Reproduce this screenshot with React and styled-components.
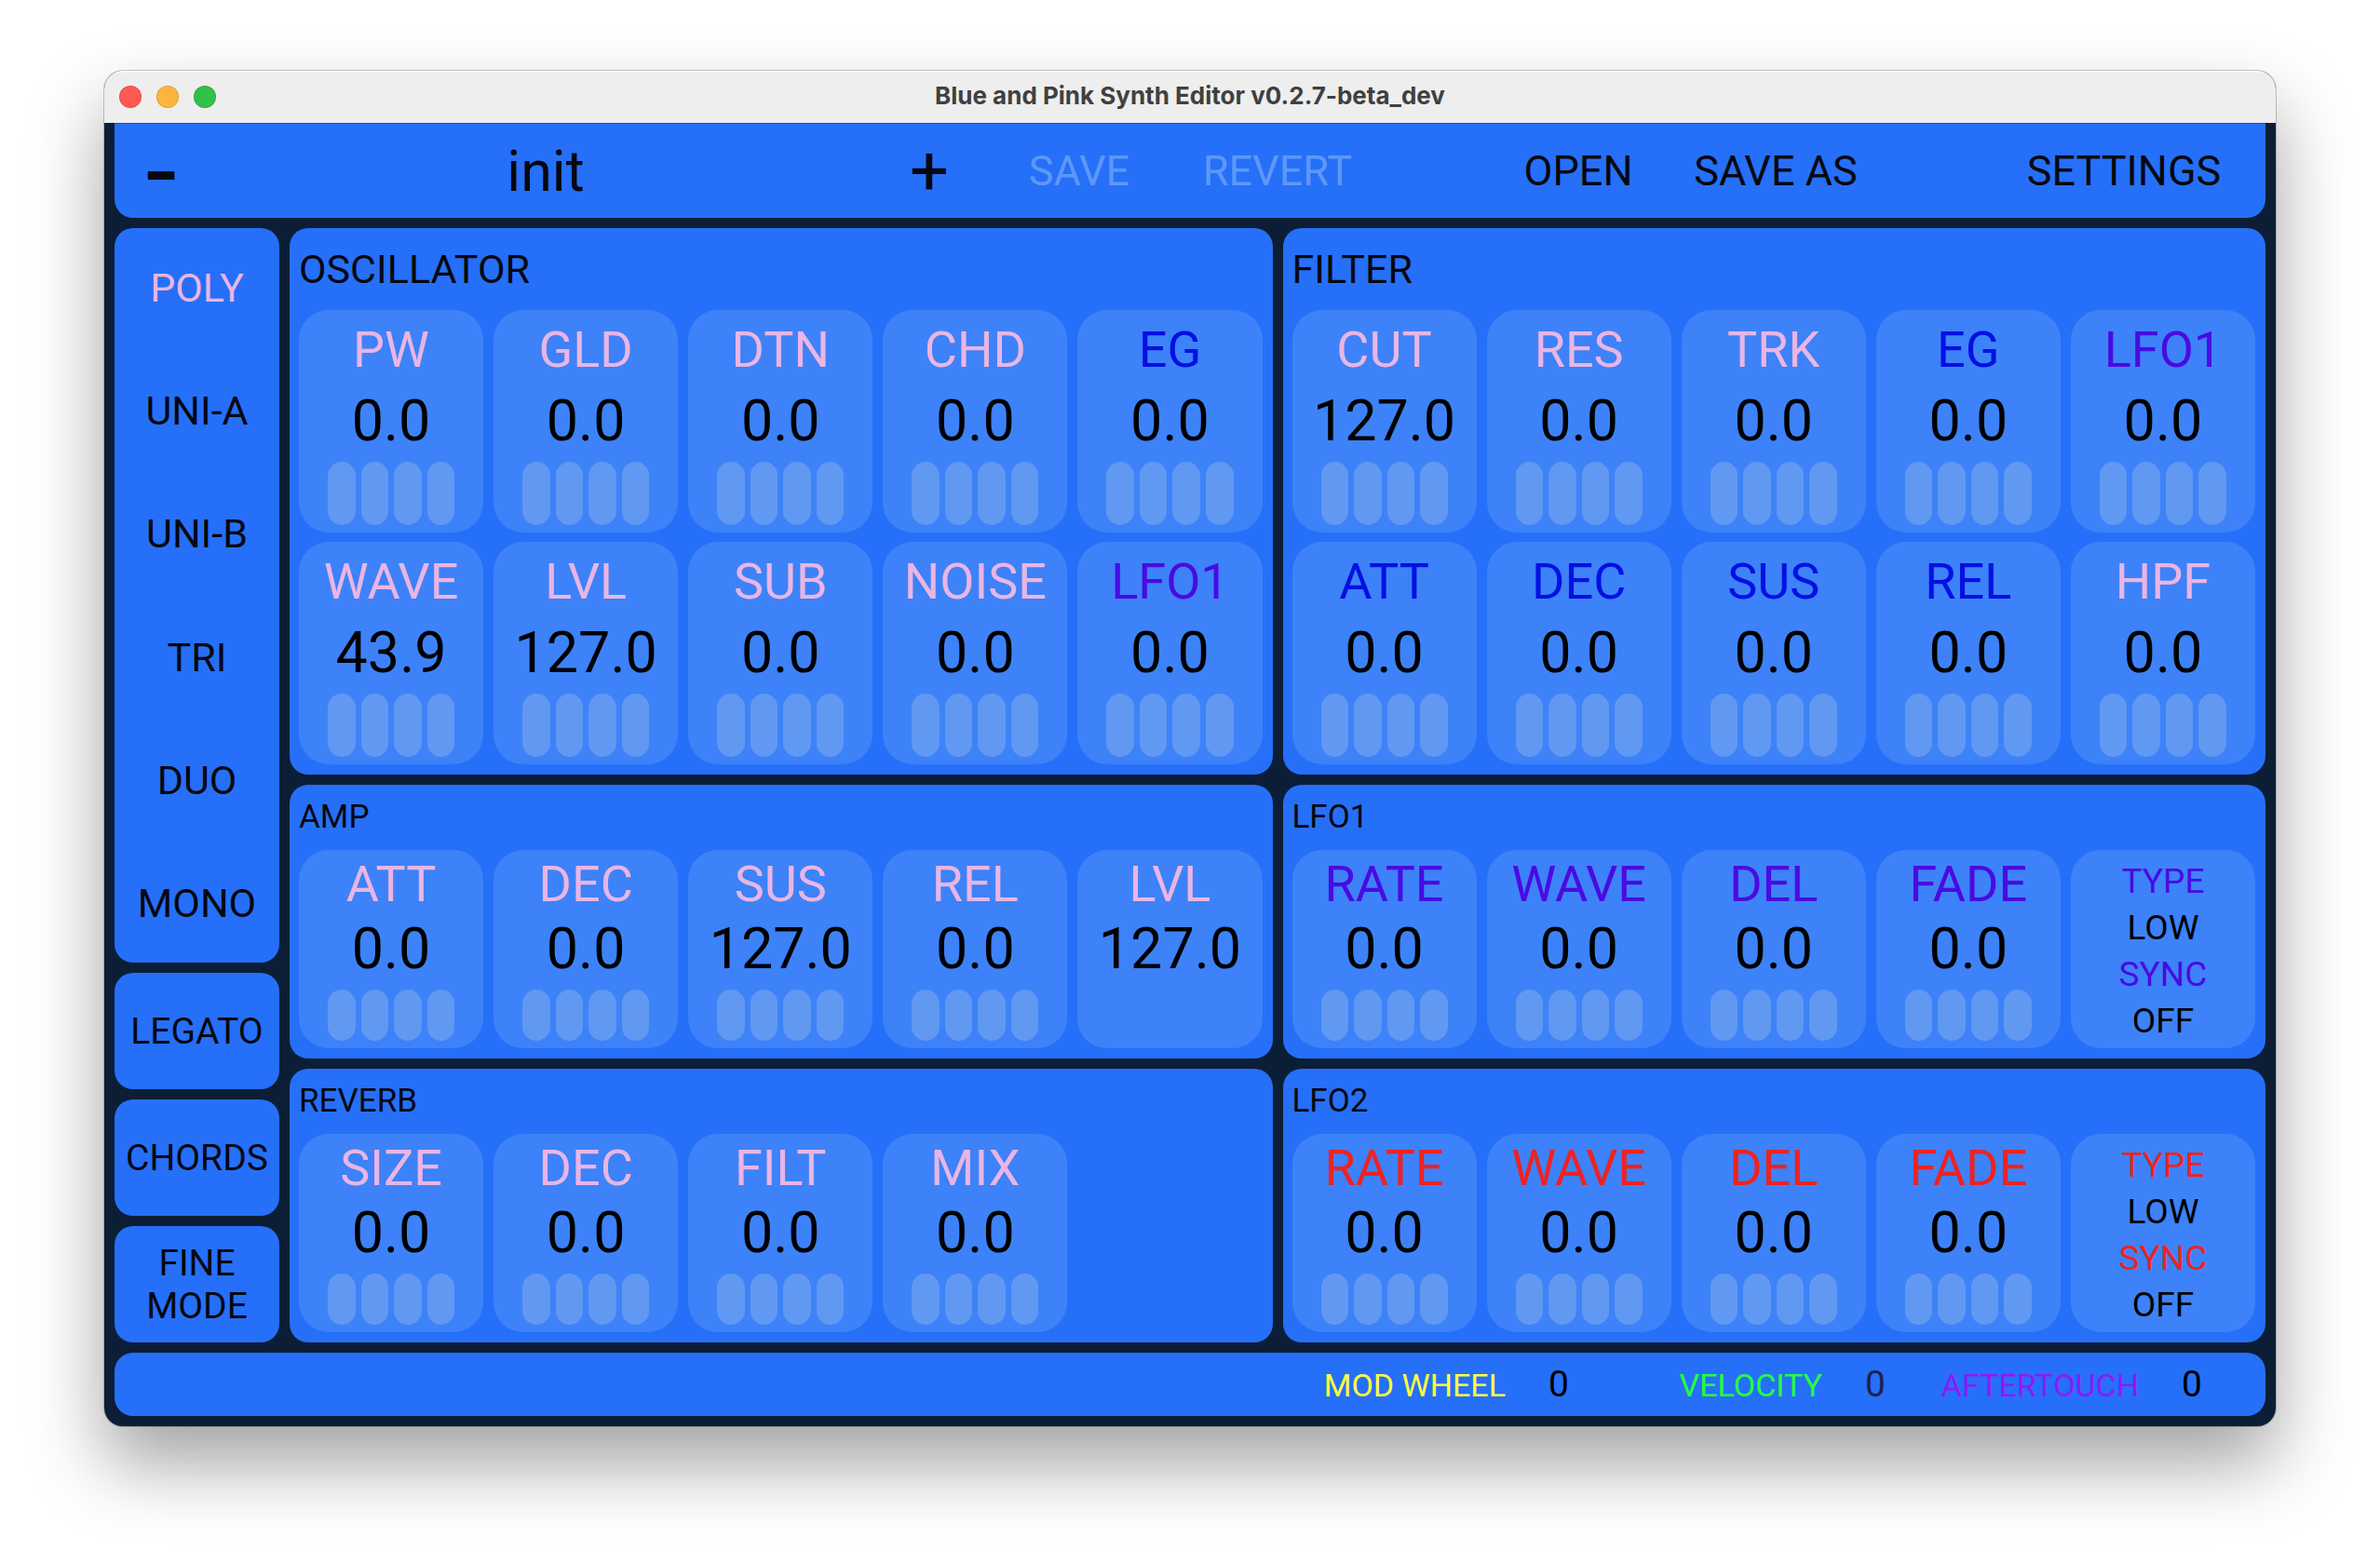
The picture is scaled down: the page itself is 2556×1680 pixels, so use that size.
import React from "react";
import styled, { createGlobalStyle } from "styled-components";

const color = {
  base: "#0c1e36",
  panel: "#266ff8",
  cell: "#3d82f8",
  slot: "#6198f2",
  ink: "#06080f",
  pink: "#e9b5e4",
  eg: "#0410e2",
  lfo1: "#4a0ae2",
  lfo2: "#ee2222",
  disabled: "#5d98f8",
  wheel: "#ffff3c",
  velocity: "#24ff3e",
  touch: "#8c1af8",
};

const GlobalStyle = createGlobalStyle`
  *, *::before, *::after { box-sizing: border-box; }
  body {
    margin: 0;
    background: #fff;
    font-family: Roboto, "Liberation Sans", sans-serif;
    color: ${color.ink};
  }
  button {
    margin: 0;
    padding: 0;
    border: 0;
    background: none;
    color: inherit;
    font: inherit;
    cursor: pointer;
  }
`;

const Page = styled.div`
  padding: 76px 112px 148px;
`;

const Window = styled.main`
  overflow: hidden;
  border-radius: 20px;
  background: ${color.base};
  box-shadow: 0 0 0 1px rgba(0, 0, 0, 0.2), 0 40px 80px rgba(0, 0, 0, 0.37);
`;

const TitleBar = styled.header`
  display: grid;
  grid-template-columns: 1fr auto 1fr;
  align-items: center;
  height: 56px;
  padding: 0 16px;
  background: #eeeeee;
  box-shadow: inset 0 2px #f8f8f8;
`;

const Lights = styled.div`
  display: flex;
  gap: 16px;
`;

const Light = styled.button`
  width: 24px;
  height: 24px;
  border-radius: 50%;
  background: ${(p) => p.$fill};
  box-shadow: inset 0 0 0 1px rgba(0, 0, 0, 0.12);
`;

const WindowTitle = styled.h1`
  margin: 0;
  padding-bottom: 2px;
  font: 700 26px/32px Inter, Roboto, sans-serif;
  color: #404040;
`;

const Body = styled.div`
  display: flex;
  flex-direction: column;
  gap: 11px;
  padding: 0 11px 11px;
`;

const Toolbar = styled.nav`
  display: grid;
  grid-template-columns: 100fr 726fr 98fr 224fr 202fr 116fr 212fr 212fr 116fr 304fr;
  align-items: center;
  height: 102px;
  padding-top: 2px;
  border-radius: 0 0 20px 20px;
  background: ${color.panel};
  box-shadow: inset 0 1px #0f50cc;
`;

const ToolButton = styled.button`
  grid-column: ${(p) => p.$col};
  font-size: 45px;
  line-height: 100px;
  white-space: nowrap;
  &:disabled {
    color: ${color.disabled};
    cursor: default;
  }
`;

const StepButton = styled.button`
  font-size: ${(p) => p.$size}px;
  line-height: 100px;
`;

const PatchName = styled.div`
  font-size: 61px;
  line-height: 100px;
  text-align: center;
`;

const Workspace = styled.div`
  display: grid;
  grid-template-columns: 177px 1fr 1fr;
  gap: 11px;
`;

const Column = styled.div`
  display: flex;
  flex-direction: column;
  gap: 11px;
  min-width: 0;
`;

const Modes = styled.div`
  display: flex;
  flex: 1;
  flex-direction: column;
  gap: 5px;
  border-radius: 20px;
  background: ${color.panel};
`;

const ModeButton = styled.button`
  flex: 1;
  font-size: 43px;
  color: ${(p) => (p.$active ? color.pink : color.ink)};
`;

const SideButton = styled.button`
  height: 125px;
  border-radius: 20px;
  background: ${color.panel};
  font-size: 39px;
  line-height: 46px;
`;

const Panel = styled.section`
  padding: 0 11px 11px 10px;
  border-radius: 20px;
  background: ${color.panel};
`;

const PanelTitle = styled.h2`
  margin: 0;
  font-size: ${(p) => (p.$tall ? 43 : 35)}px;
  font-weight: 400;
  line-height: ${(p) => (p.$tall ? 88 : 70)}px;
`;

const Cells = styled.div`
  display: grid;
  grid-template-columns: repeat(5, minmax(0, 1fr));
  gap: 10px 11px;
`;

const Cell = styled.div`
  display: flex;
  flex-direction: column;
  height: ${(p) => (p.$tall ? 239 : 213)}px;
  padding-bottom: 8px;
  border-radius: 32px;
  background: ${color.cell};
  text-align: center;
`;

const CellLabel = styled.div`
  font-size: 54px;
  line-height: ${(p) => (p.$tall ? 86 : 73)}px;
  color: ${(p) => p.$color};
`;

const CellValue = styled.output`
  font-size: 61px;
  line-height: 66px;
  color: #000;
`;

const Slots = styled.div`
  display: flex;
  gap: 6px;
  height: ${(p) => (p.$tall ? 68 : 55)}px;
  margin-top: auto;
  padding: 0 31px;
`;

const Slot = styled.span`
  flex: 1;
  border-radius: 15px;
  background: ${color.slot};
`;

const SwitchCell = styled(Cell)`
  padding: 9px 0 7px;
`;

const SwitchLine = styled.div`
  flex: 1;
  font-size: 37px;
  line-height: 50px;
  color: ${(p) => p.$color || "#000"};
`;

const Footer = styled.footer`
  display: flex;
  justify-content: flex-end;
  align-items: center;
  height: 68px;
  padding-right: 22px;
  border-radius: 20px;
  background: ${color.panel};
`;

const Meter = styled.div`
  display: grid;
  grid-template-columns: 226px 114px;
  align-items: baseline;
`;

const MeterLabel = styled.span`
  font-size: 34px;
  text-align: right;
  white-space: nowrap;
  color: ${(p) => p.$color};
`;

const MeterValue = styled.output`
  font-size: 39px;
  text-align: center;
  color: ${(p) => (p.$dim ? "#1c2350" : "#000")};
`;

const { pink, eg, lfo1, lfo2 } = color;

const oscillator = [
  ["PW", "0.0", pink],
  ["GLD", "0.0", pink],
  ["DTN", "0.0", pink],
  ["CHD", "0.0", pink],
  ["EG", "0.0", eg],
  ["WAVE", "43.9", pink],
  ["LVL", "127.0", pink],
  ["SUB", "0.0", pink],
  ["NOISE", "0.0", pink],
  ["LFO1", "0.0", lfo1],
];

const filter = [
  ["CUT", "127.0", pink],
  ["RES", "0.0", pink],
  ["TRK", "0.0", pink],
  ["EG", "0.0", eg],
  ["LFO1", "0.0", lfo1],
  ["ATT", "0.0", eg],
  ["DEC", "0.0", eg],
  ["SUS", "0.0", eg],
  ["REL", "0.0", eg],
  ["HPF", "0.0", pink],
];

const amp = [
  ["ATT", "0.0", pink],
  ["DEC", "0.0", pink],
  ["SUS", "127.0", pink],
  ["REL", "0.0", pink],
  ["LVL", "127.0", pink, true],
];

const reverb = [
  ["SIZE", "0.0", pink],
  ["DEC", "0.0", pink],
  ["FILT", "0.0", pink],
  ["MIX", "0.0", pink],
];

const lfo = (tint) => ["RATE", "WAVE", "DEL", "FADE"].map((name) => [name, "0.0", tint]);

const modes = ["POLY", "UNI-A", "UNI-B", "TRI", "DUO", "MONO"];

function Param({ name, value, tint, tall, plain }) {
  return (
    <Cell $tall={tall}>
      <CellLabel $tall={tall} $color={tint}>{name}</CellLabel>
      <CellValue>{value}</CellValue>
      {!plain && (
        <Slots $tall={tall}>
          <Slot />
          <Slot />
          <Slot />
          <Slot />
        </Slots>
      )}
    </Cell>
  );
}

function ParamPanel({ title, params, tall, children }) {
  return (
    <Panel>
      <PanelTitle $tall={tall}>{title}</PanelTitle>
      <Cells>
        {params.map(([name, value, tint, plain]) => (
          <Param key={name} name={name} value={value} tint={tint} tall={tall} plain={plain} />
        ))}
        {children}
      </Cells>
    </Panel>
  );
}

function LfoSwitches({ tint }) {
  return (
    <SwitchCell>
      <SwitchLine $color={tint}>TYPE</SwitchLine>
      <SwitchLine>LOW</SwitchLine>
      <SwitchLine $color={tint}>SYNC</SwitchLine>
      <SwitchLine>OFF</SwitchLine>
    </SwitchCell>
  );
}

export default function App() {
  const [mode, setMode] = React.useState("POLY");
  return (
    <Page>
      <GlobalStyle />
      <Window>
        <TitleBar>
          <Lights>
            <Light $fill="#ff5a52" aria-label="Close" />
            <Light $fill="#fdb53f" aria-label="Minimize" />
            <Light $fill="#31c148" aria-label="Zoom" />
          </Lights>
          <WindowTitle>Blue and Pink Synth Editor v0.2.7-beta_dev</WindowTitle>
        </TitleBar>
        <Body>
          <Toolbar>
            <StepButton $size={120}>-</StepButton>
            <PatchName>init</PatchName>
            <StepButton $size={74}>+</StepButton>
            <ToolButton $col={4} disabled>SAVE</ToolButton>
            <ToolButton $col={5} disabled>REVERT</ToolButton>
            <ToolButton $col={7}>OPEN</ToolButton>
            <ToolButton $col={8}>SAVE AS</ToolButton>
            <ToolButton $col={10}>SETTINGS</ToolButton>
          </Toolbar>
          <Workspace>
            <Column>
              <Modes>
                {modes.map((name) => (
                  <ModeButton
                    key={name}
                    $active={name === mode}
                    aria-pressed={name === mode}
                    onClick={() => setMode(name)}
                  >
                    {name}
                  </ModeButton>
                ))}
              </Modes>
              <SideButton>LEGATO</SideButton>
              <SideButton>CHORDS</SideButton>
              <SideButton>
                FINE
                <br />
                MODE
              </SideButton>
            </Column>
            <Column>
              <ParamPanel title="OSCILLATOR" params={oscillator} tall />
              <ParamPanel title="AMP" params={amp} />
              <ParamPanel title="REVERB" params={reverb} />
            </Column>
            <Column>
              <ParamPanel title="FILTER" params={filter} tall />
              <ParamPanel title="LFO1" params={lfo(lfo1)}>
                <LfoSwitches tint={lfo1} />
              </ParamPanel>
              <ParamPanel title="LFO2" params={lfo(lfo2)}>
                <LfoSwitches tint={lfo2} />
              </ParamPanel>
            </Column>
          </Workspace>
          <Footer>
            <Meter>
              <MeterLabel $color={color.wheel}>MOD WHEEL</MeterLabel>
              <MeterValue>0</MeterValue>
            </Meter>
            <Meter>
              <MeterLabel $color={color.velocity}>VELOCITY</MeterLabel>
              <MeterValue $dim>0</MeterValue>
            </Meter>
            <Meter>
              <MeterLabel $color={color.touch}>AFTERTOUCH</MeterLabel>
              <MeterValue>0</MeterValue>
            </Meter>
          </Footer>
        </Body>
      </Window>
    </Page>
  );
}
